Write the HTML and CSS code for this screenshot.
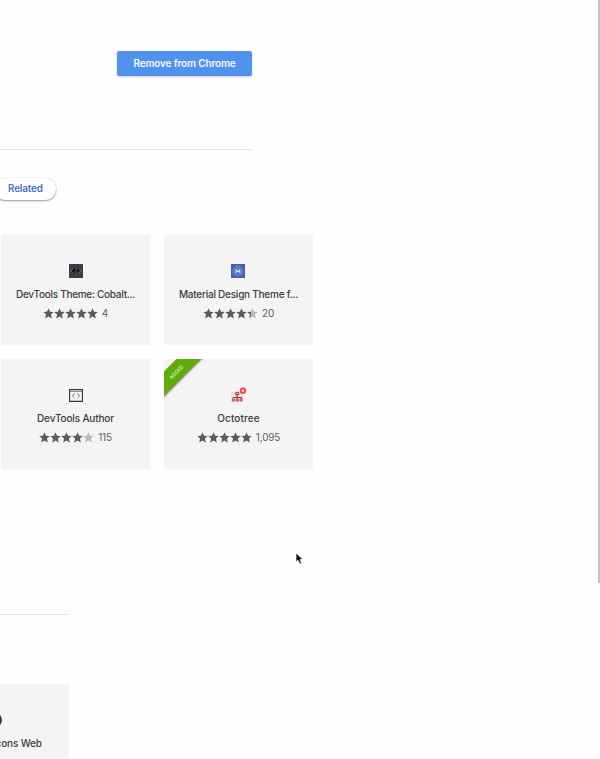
FILE: index.html
```
<!DOCTYPE html>
<html lang="en">
<head>
<meta charset="utf-8">
<title>Chrome Web Store</title>
<link rel="stylesheet" href="styles.css">
</head>
<body>
<svg class="defs" aria-hidden="true">
  <symbol id="star" viewBox="0 0 10 10"><path d="M5 .2 6.4 3.4 9.8 3.7 7.2 6 8 9.5 5 7.7 2 9.5 2.8 6 .2 3.7 3.6 3.4Z"/></symbol>
</svg>
<main class="page">
  <header class="header"><button class="remove">Remove from Chrome</button></header>
  <nav class="tabs"><a class="tab">Related</a></nav>
  <section class="grid">
    <article class="card">
      <svg class="icon" viewBox="0 0 14 14"><path fill="#383d46" d="M0 0h14v14H0z"/><path d="M1.5 8Q4 4 7 5q4-1 5.5 2L11 8 9.5 6 8 8.5 6 8 4.5 9Z" fill="#101114"/><path d="m4 5-2.3 2L4 8.8M10 5l2.3 2L10 8.8" fill="none" stroke="#a58a7b" stroke-width=".7"/><path d="m6.2 8 1.5-3" stroke="#7088aa" stroke-width=".8"/></svg>
      <h3 class="name cobalt">DevTools Theme: Cobalt...</h3>
      <div class="rating"><span class="stars"><svg><use href="#star"/></svg><svg><use href="#star"/></svg><svg><use href="#star"/></svg><svg><use href="#star"/></svg><svg><use href="#star"/></svg></span><span>4</span></div>
    </article>
    <article class="card">
      <svg class="icon" viewBox="0 0 14 14"><path fill="#4c5cae" d="M0 0h14v14H0z"/><circle cx="7" cy="7" r="5.8" fill="#507bc5"/><path d="M5.2 9V5.5L7 8l1.8-2.5V9" fill="none" stroke="#e5edf8" stroke-width="1"/></svg>
      <h3 class="name material">Material Design Theme f...</h3>
      <div class="rating"><span class="stars"><svg><use href="#star"/></svg><svg><use href="#star"/></svg><svg><use href="#star"/></svg><svg><use href="#star"/></svg><svg viewBox="0 0 10 10"><use class="off" href="#star"/><path d="M.2 3.7 3.6 3.4V7L2 9.5 2.8 6Z"/></svg></span><span>20</span></div>
    </article>
    <article class="card">
      <svg class="icon" viewBox="0 0 14 14"><path d="M.6 1.6h12.8v11.8H.6z" fill="#f4f4f2" stroke="#33373c" stroke-width="1.1"/><path d="M1 3.5h12" stroke="#777" stroke-width=".8"/><path d="M5.5 5.5 3.5 8M8.5 5.5l2 2.5" fill="none" stroke="#59609a"/><path d="m3.5 8 2.2 2.3M10.5 8l-2.2 2.3" fill="none" stroke="#a0aa38"/></svg>
      <h3 class="name author">DevTools Author</h3>
      <div class="rating"><span class="stars"><svg><use href="#star"/></svg><svg><use href="#star"/></svg><svg><use href="#star"/></svg><svg><use href="#star"/></svg><svg class="off"><use href="#star"/></svg></span><span>115</span></div>
    </article>
    <article class="card">
      <span class="ribbon"><b>ADDED</b></span>
      <svg class="icon" viewBox="0 0 14 14"><path fill="#e5e5e5" d="M0 4h12v10H0z"/><path d="M6.2 6v5M2.2 12v-2.5h8.3V12" fill="none" stroke="#6f4545"/><g fill="#e54343"><circle cx="6.2" cy="5.6" r="2.2"/><circle cx="2.4" cy="12" r="1.7"/><circle cx="6.3" cy="12" r="1.7"/><circle cx="10.2" cy="12" r="1.7"/></g><path d="M2 12h.8M5.9 12h.8M9.8 12h.8M5.8 5.5h.8" stroke="#fff"/><circle cx="11.9" cy="2.7" r="2.4" fill="#f4b8b8" stroke="#e33b3f" stroke-width="1.4"/></svg>
      <h3 class="name octotree">Octotree</h3>
      <div class="rating"><span class="stars"><svg><use href="#star"/></svg><svg><use href="#star"/></svg><svg><use href="#star"/></svg><svg><use href="#star"/></svg><svg><use href="#star"/></svg></span><span>1,095</span></div>
    </article>
  </section>
  <section class="more">
    <article class="card-cut"><i class="dot"></i><h3 class="name">Icons Web</h3></article>
  </section>
</main>
<div class="scrollbar"></div>
<svg class="cursor" viewBox="0 0 9 14"><path d="M1 1v9l2-1.8L4.8 12l1.7-.8L5 7.5h3Z" fill="#111" stroke="#fff" stroke-width=".7"/></svg>
</body>
</html>
```
FILE: styles.css
```
* { box-sizing: border-box; }
body { margin: 0; background: #fefefe; color: #3c3c3e; font-family: Inter, "Open Sans", sans-serif; }
.defs { display: none; }
.page { display: flex; flex-direction: column; width: 600px; height: 759px; overflow: hidden; }
.header { width: 252px; height: 150px; flex: none; padding-top: 51px; border-bottom: 1px solid #e4e4e4; display: flex; justify-content: flex-end; align-items: flex-start; }
.remove { width: 135px; height: 25px; padding: 0; border: 0; border-radius: 2px; background: #5292ef; box-shadow: 0 1px 2px #ccd; color: #f7f9fd; font: 600 10px/25px Inter, sans-serif; letter-spacing: -.15px; }
.tabs { height: 84px; flex: none; padding-top: 28px; }
.tab { display: block; width: 62px; height: 22px; margin-left: -6px; padding-left: 14px; border-radius: 11px; background: #fff; box-shadow: 0 1px 2px #999, 0 0 1px #ccc; color: #416fc2; font-size: 9.8px; font-weight: 600; letter-spacing: -.1px; line-height: 21px; }
.grid { flex: none; display: grid; grid-template-columns: 149px 149px; grid-auto-rows: 110px; gap: 14px; margin: 1px 0 0 1px; width: 312px; }
.card { position: relative; display: flex; flex-direction: column; align-items: center; padding-top: 29px; background: #f4f4f4; }
.icon { width: 14px; height: 14px; overflow: visible; }
.card:nth-child(even) .icon { margin-right: 1px; }
.name { margin: 9px 0 0; font-size: 10px; font-weight: 500; letter-spacing: -.15px; line-height: 14px; white-space: nowrap; }
.cobalt { letter-spacing: -.28px; }
.material { letter-spacing: -.24px; }
.octotree { letter-spacing: .08px; }
.rating { display: flex; align-items: center; gap: 4px; height: 14px; margin-top: 5px; color: #606060; font-size: 10px; letter-spacing: -.2px; }
.stars { display: flex; }
.stars svg { width: 11px; height: 11px; fill: #5b5b5b; }
.stars .off { fill: #bbb; }
.ribbon { position: absolute; left: 0; top: 0; width: 40px; height: 40px; overflow: hidden; }
.ribbon b { position: absolute; left: -21px; top: 4px; width: 66px; height: 17px; background: #5eac0a; box-shadow: 0 1px 2px #777; color: #e0efd0; font-size: 5px; font-weight: 500; line-height: 18px; text-align: center; transform: rotate(-45deg); }
.more { width: 69px; flex: none; height: 145px; margin-top: 145px; padding-top: 69px; border-top: 1px solid #e7e7e7; }
.card-cut { height: 76px; padding-top: 29px; background: #f4f4f4; }
.dot { display: block; width: 14px; height: 14px; margin-left: -12px; border-radius: 50%; background: #36383d; }
.card-cut .name { margin-left: -7px; }
.scrollbar { position: fixed; right: 0; top: 0; width: 2px; height: 583px; background: #c1c1c1; }
.cursor { position: fixed; left: 295px; top: 552px; width: 9px; height: 14px; }
```
